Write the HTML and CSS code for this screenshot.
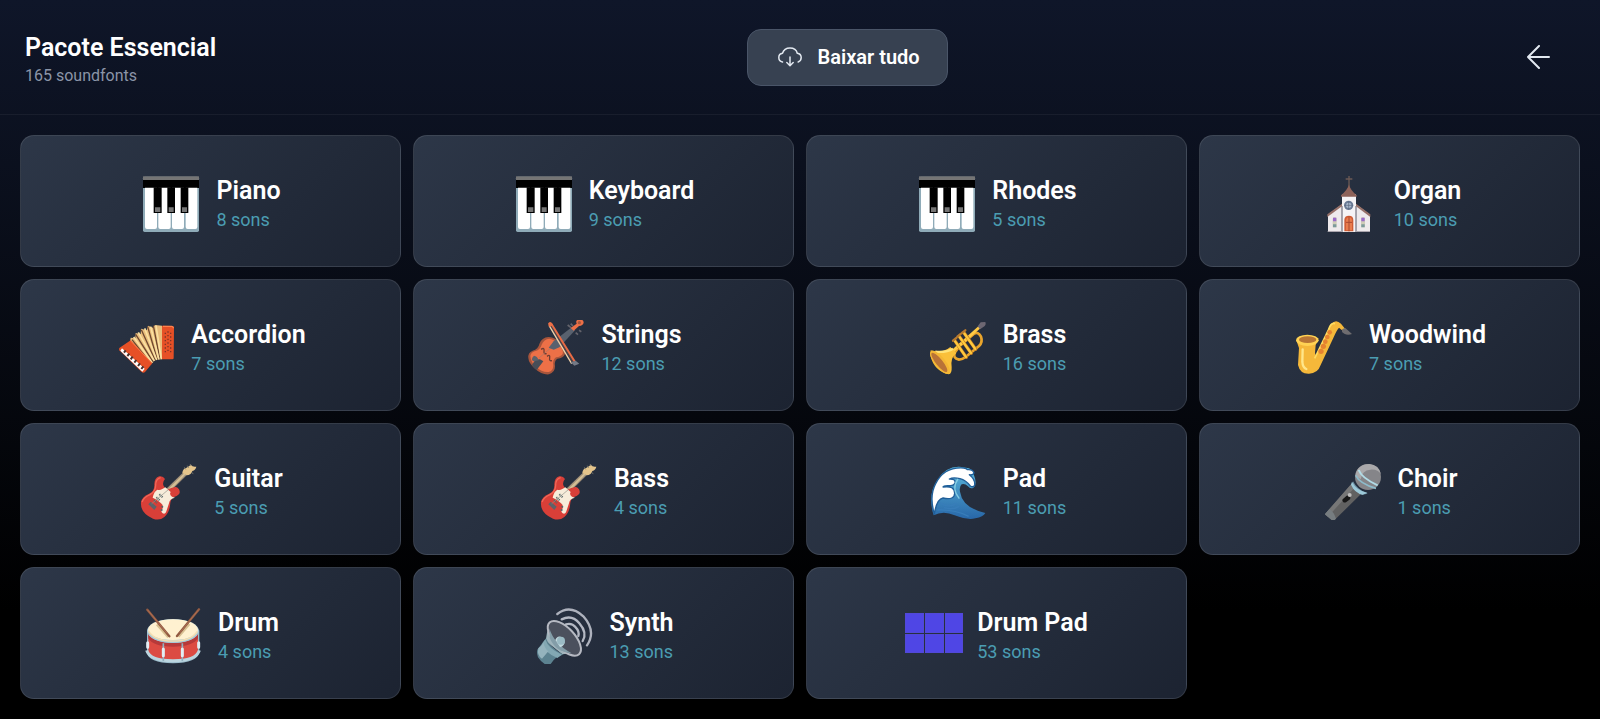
FILE: index.html
```html
<!DOCTYPE html>
<html lang="pt-BR">
<head>
	<meta charset="UTF-8">
	<meta name="viewport" content="width=device-width, initial-scale=1.0">
	<title>Pacote Essencial</title>
	<link rel="stylesheet" href="styles.css">
</head>
<body>
	<!-- icons used by more than one card -->
	<svg class="sprite" aria-hidden="true">
		<symbol id="icon-piano" viewBox="0 0 168 168">
			<rect y="2" width="168" height="166" rx="5" fill="#8fabb8"/>
			<rect y="1" width="168" height="12" fill="#757575"/>
			<rect y="12" width="168" height="24" fill="#000"/>
			<path d="M6 35h36v118q0 6-6 6H12q-6 0-6-6zM46 35h37v118q0 6-6 6H52q-6 0-6-6zM87 35h36v118q0 6-6 6H93q-6 0-6-6zM128 35h35v118q0 6-6 6h-23q-6 0-6-6z" fill="#fff"/>
			<path d="M32 34h24v77H32zM73 34h23v77H73zM113 34h23v77h-23z" fill="#000"/>
			<path d="M36 94h16v14H36zM77 94h15v14H77zM117 94h15v14h-15z" fill="#757575"/>
		</symbol>
		<symbol id="icon-guitar" viewBox="66 69 168 168">
			<path d="M139 146L193 94l10 9-55 54z" fill="#a3927a"/>
			<path d="M144 148L196 96l4 4-51 53z" fill="#d3bf95"/>
			<path d="M190 96Q191 82 203 80L216 71q4 8 16 6-2 10-12 13-3 12-17 13z" fill="#e5c58c"/>
			<path d="M196 79l4 6M205 74l4 6M213 69l4 6M218 95l5 3" stroke="#77776f" stroke-width="3"/>
			<path d="M66 184q3-17 23-25 18-8 17-27-1-21 15-26 11-2 17 8-9 10-4 21 5 11 17 8 14-5 18-5 5-1 11 7 7 14-7 20-17 5-19 20-2 30-18 43-14 12-34 5-39-17-36-49z" fill="#d93f38"/>
			<path d="M69 183q6-15 24-22 17-9 17-28 0-20 15-23" fill="none" stroke="#f16859" stroke-width="4"/>
			<path d="M101 170q4-19 14-24 8 2 15-2l9-5 16 14q-5 8 4 14l9 3q-17 4-18 17l-9 27q-4 7-10 3-7-5-1-13 5-10-4-17-5-7-25-17z" fill="#f7edda"/>
			<path d="M88 190l7-8 18 15-7 10z" fill="#5d6269"/>
			<path d="M105 178l9 8M112 169l11 10M121 160l11 10" stroke="#526669" stroke-width="6" stroke-dasharray="3 2"/>
			<path d="M98 188l50-42" stroke="#8f9188" stroke-width="2"/>
			<circle cx="130" cy="197" r="3" fill="#54666b"/><circle cx="128" cy="207" r="3" fill="#54666b"/>
		</symbol>
	</svg>

	<header class="header">
		<div class="pack">
			<h1>Pacote Essencial</h1>
			<p>165 soundfonts</p>
		</div>
		<button type="button" class="download">
			<svg width="24" height="24" viewBox="0 0 24 24" fill="none" stroke="currentColor" stroke-width="1.5" stroke-linecap="round" stroke-linejoin="round" aria-hidden="true">
				<path d="M4.5 17C2 16.5.8 14.500.8 12.500c0-2.500 1.600-4 3.700-4.300C5.500 5 8.300 3 12 3s6.500 2 7.300 5.200c2.200.3 3.900 2 3.900 4.400 0 2-1.200 3.800-3 4.400"/>
				<path d="M12 12v8.500M8.800 17.500l3.200 3.200 3.200-3.200"/>
			</svg>
			Baixar tudo
		</button>
		<button type="button" class="back" aria-label="Voltar">
			<svg width="24" height="24" viewBox="0 0 24 24" fill="none" stroke="currentColor" stroke-width="2" stroke-linecap="round" stroke-linejoin="round" aria-hidden="true">
				<path d="M12 1L1 12l11 11M1 12h21"/>
			</svg>
		</button>
	</header>

	<main class="grid">
		<button type="button" class="card">
			<svg class="icon" aria-hidden="true"><use href="#icon-piano"/></svg>
			<span class="info"><span class="name">Piano</span><span class="count">8 sons</span></span>
		</button>
		<button type="button" class="card">
			<svg class="icon" aria-hidden="true"><use href="#icon-piano"/></svg>
			<span class="info"><span class="name">Keyboard</span><span class="count">9 sons</span></span>
		</button>
		<button type="button" class="card">
			<svg class="icon" aria-hidden="true"><use href="#icon-piano"/></svg>
			<span class="info"><span class="name">Rhodes</span><span class="count">5 sons</span></span>
		</button>
		<button type="button" class="card">
			<svg class="icon" viewBox="63 495 168 168" aria-hidden="true">
				<path d="M147 492v36M137 504h20" stroke="#6c5a55" stroke-width="4"/>
				<path d="M84 611l40-30h46l40 30v52H84z" fill="#eeeaec"/>
				<path d="M126 663V550h42v113z" fill="#f5f3f5"/>
				<path d="M126 585v78M168 585v78" stroke="#5b5966" stroke-width="3"/>
				<path d="M147 521q3 14 23 32v4h-47v-4q20-18 24-32z" fill="#8d6259"/>
				<path d="M126 578l-44 32v8l44-32zM168 578l43 32v8l-43-32z" fill="#967068"/>
				<circle cx="146" cy="583" r="14" fill="#6c7c96"/>
				<circle cx="146" cy="583" r="8" fill="#aab9cd"/>
				<path d="M146 570v26M133 583h26" stroke="#59677f" stroke-width="2"/>
				<path d="M133 661v-34q0-13 14-13 13 0 13 13v34z" fill="#cf5c35"/>
				<path d="M138 658v-29q0-9 9-10 9 1 9 10v29z" fill="#e87c4e"/>
				<path d="M147 616v45M138 634h18" stroke="#a9482f" stroke-width="3"/>
				<path d="M98 649v-24q0-7 6-7t6 7v24zM183 649v-24q0-7 6-7t6 7v24z" fill="#cfcdb9"/>
				<path d="M99 620h10v11H99zM184 620h10v11h-10z" fill="#9a69c9"/>
				<path d="M99 640h10v9H99zM184 640h10v9h-10z" fill="#7c9a9b"/>
				<path d="M83 662h43M168 662h42" stroke="#aaa5ad" stroke-width="4"/>
			</svg>
			<span class="info"><span class="name">Organ</span><span class="count">10 sons</span></span>
		</button>

		<button type="button" class="card">
			<svg class="icon" viewBox="54 60 168 168" aria-hidden="true">
				<path d="M90 125l2-12 14 2 1-16 15 3 1-16 17 5 4-14 14 6 7-8 21 2v98l-22 1-9 4-14 18z" fill="#e9bd7c"/>
				<path d="M96 119l58 74M107 103l53 84M124 89l42 93M143 80l29 100M160 77l20 102" stroke="#6e4830" stroke-width="4"/>
				<path d="M101 111l56 78M115 97l48 86M134 85l36 95M152 80l25 99M168 77l16 101" stroke="#fbe1a2" stroke-width="5"/>
				<path d="M186 77l31 1q5 1 5 6l-1 90q0 4-4 4h-31z" fill="#e65026"/>
				<path d="M189 79h26q5 0 5 6" fill="none" stroke="#ff804b" stroke-width="4"/>
				<path d="M196 98v66M204 94v66M212 98v66" stroke="#7d3328" stroke-width="4" stroke-dasharray="4 7"/>
				<path d="M92 121l65 69-22 26q-5 4-10 0l-67-65q-3-4 1-8z" fill="#e65026"/>
				<path d="M93 124l61 64" stroke="#fa7846" stroke-width="3"/>
				<path d="M66 145l68 61-7 9-66-63z" fill="#fff"/>
				<path d="M77 151l-5 7M88 161l-6 7M98 170l-6 8M109 180l-6 8M120 190l-6 8M130 199l-6 8" stroke="#4b312c" stroke-width="6"/>
			</svg>
			<span class="info"><span class="name">Accordion</span><span class="count">7 sons</span></span>
		</button>
		<button type="button" class="card">
			<svg class="icon" viewBox="56 60 168 168" aria-hidden="true">
				<path d="M57 174q-2-16 13-22 17-4 20-20 7-20 28-21 21 1 34 20 18 18 15 31-5 13-23 14-10 7-7 23 0 19-18 24-22 2-41-16-20-17-21-33z" fill="#a7553c"/>
				<path d="M63 168q2-11 13-14 17-5 21-20 7-17 23-18 17 2 29 19 15 16 11 27-6 9-20 10-11 8-8 24 0 17-14 20-20 2-37-14-17-16-18-34z" fill="#ed7047"/>
				<path d="M95 148q11-7 9 6-1 9 8 7M113 169q10-7 8 5-2 10 7 8" fill="none" stroke="#713e33" stroke-width="4"/>
				<path d="M78 179l14-1 10 6-20 26q-9-5-14-15z" fill="#474e58"/>
				<path d="M74 167q10 1 14 14l-15 3q-11-5 1-17z" fill="#5e626a"/>
				<path d="M89 174l99-85" stroke="#a5796b" stroke-width="2"/>
				<path d="M118 143l15-19 54-42 11 8-48 52-17 7z" fill="#59616e"/>
				<path d="M175 75l10 8M199 98l7 6M209 91l7 4M184 71l7 7" stroke="#65646c" stroke-width="5"/>
				<path d="M184 84l18-13q-5-11 8-13 13 0 13 10-2 9-14 10l-16 14z" fill="#ed7047"/>
				<circle cx="210" cy="68" r="5" fill="#a9583e"/>
				<path d="M122 73l70 112" stroke="#4b4248" stroke-width="8"/>
				<path d="M119 76l68 115" stroke="#f1d1a9" stroke-width="4"/>
				<path d="M126 71l71 115" stroke="#e96b44" stroke-width="6"/>
				<path d="M116 71q4-8 11-3l4 8-11 5z" fill="#ed7047"/>
				<path d="M184 187l15-5 11 9-15 6z" fill="#737985"/>
			</svg>
			<span class="info"><span class="name">Strings</span><span class="count">12 sons</span></span>
		</button>
		<button type="button" class="card">
			<svg class="icon" viewBox="60 60 168 168" aria-hidden="true">
				<path d="M135 157q-8 18 12 22 9 0 20-8l40-33q12-12 6-28-8-17-22-8l-42 36z" fill="none" stroke="#eaa52c" stroke-width="8"/>
				<path d="M124 157l85-76" stroke="#ffca45" stroke-width="9"/>
				<path d="M135 123l34 49M149 111l35 49M163 100l34 48" stroke="#b77320" stroke-width="10" stroke-linecap="round"/>
				<path d="M134 122l34 49M148 110l35 49M162 99l34 48" stroke="#ffc93d" stroke-width="7" stroke-linecap="round"/>
				<path d="M129 122l10-8M142 110l10-8M156 99l10-8" stroke="#b97a2e" stroke-width="7" stroke-linecap="round"/>
				<path d="M203 79l9-12 14-1q4 9-6 15l-10 7z" fill="#6d6772"/>
				<path d="M62 151q35 10 59-10l18 18q-18 14-14 42 1 21-9 22-43-10-55-56z" fill="#fac03a"/>
				<path d="M76 155q34 3 53-9" fill="none" stroke="#ffe379" stroke-width="7"/>
				<ellipse cx="90" cy="187" rx="43" ry="16" transform="rotate(51 90 187)" fill="#f4b735"/>
				<ellipse cx="88" cy="187" rx="36" ry="10" transform="rotate(51 88 187)" fill="#b97337"/>
			</svg>
			<span class="info"><span class="name">Brass</span><span class="count">16 sons</span></span>
		</button>
		<button type="button" class="card">
			<svg class="icon" viewBox="46 60 168 168" aria-hidden="true">
				<path d="M48 124l7 20-3 51q6 27 33 26 26 0 35-26l39-83q9-22 16-29l11 9q6 1 7-6l-12-15q-15-15-29 0-10 16-16 37l-30 60-3-9 2-24 9-20z" fill="#f5b83a"/>
				<path d="M102 175l42-87q7-21 19-17" fill="none" stroke="#ffdc61" stroke-width="5"/>
				<path d="M66 148l-1 37q1 18 12 22" fill="none" stroke="#ffe68a" stroke-width="7" stroke-linecap="round"/>
				<ellipse cx="80" cy="121" rx="34" ry="17" fill="#ffd253"/>
				<ellipse cx="81" cy="119" rx="26" ry="10" fill="#b87535"/>
				<g fill="#e68230"><circle cx="147" cy="97" r="7"/><circle cx="140" cy="111" r="7"/><circle cx="134" cy="125" r="7"/><circle cx="128" cy="139" r="8"/><circle cx="121" cy="154" r="8"/></g>
				<path d="M185 87l9-3 20 18q-13 5-23-1l-7-5z" fill="#6f6d70"/>
			</svg>
			<span class="info"><span class="name">Woodwind</span><span class="count">7 sons</span></span>
		</button>

		<button type="button" class="card">
			<svg class="icon" aria-hidden="true"><use href="#icon-guitar"/></svg>
			<span class="info"><span class="name">Guitar</span><span class="count">5 sons</span></span>
		</button>
		<button type="button" class="card">
			<svg class="icon" aria-hidden="true"><use href="#icon-guitar"/></svg>
			<span class="info"><span class="name">Bass</span><span class="count">4 sons</span></span>
		</button>
		<button type="button" class="card">
			<svg class="icon" viewBox="62 39 168 168" aria-hidden="true">
				<defs>
					<linearGradient id="sea" x2="0" y2="1">
						<stop offset="0" stop-color="#5bb8dc"/>
						<stop offset="1" stop-color="#2867a8"/>
					</linearGradient>
				</defs>
				<path d="M73 193q-20-63 12-107 30-48 83-36 21-1 25 20 12 31-1 40-8 6-17-5-8-8-18-5-8 7-5 22 7 48 76 64-6 12-30 16-24 6-62-9-34-16-63 0z" fill="url(#sea)"/>
				<path d="M92 155q24 18 51 2M104 170q27 8 45-4M84 177q50-3 94 19" fill="none" stroke="#387db9" stroke-width="4"/>
				<path d="M75 189Q59 135 79 98q25-51 84-47 9 1 11 5 17-2 20 10-2 7-14 5 18 13 16 32-5 7-13 2-13-17-31-22-21-5-32 1 19-1 17 11-2 10-17 9-17-1-19 4 35-5 35 19 0 21-35 14-19 3-26 48z" fill="#fff" stroke="#205f99" stroke-width="4" stroke-linejoin="round"/>
				<path d="M146 84q-21 28 4 59" fill="none" stroke="#83cbe3" stroke-width="4"/>
			</svg>
			<span class="info"><span class="name">Pad</span><span class="count">11 sons</span></span>
		</button>
		<button type="button" class="card">
			<svg class="icon" viewBox="73 39 168 168" aria-hidden="true">
				<path d="M74 188l80-91 30 29-80 79q-6 6-12 1l-17-14q-3-2-1-4z" fill="#616161"/>
				<path d="M74 188l80-91 10 10-82 90z" fill="#777"/>
				<path d="M74 188l12-13q14 8 20 28l-4 4q-4 2-10-1l-17-14q-3-2-1-4z" fill="#777d80"/>
				<path d="M126 145l12-11q5-2 9 2t1 9l-12 9q-6 2-9-2-4-4-1-7z" fill="#171717"/>
				<circle cx="147" cy="132" r="6" fill="#bdbdbd"/>
				<circle cx="202" cy="78" r="39" fill="#858589"/>
				<path d="M164 75q5-35 42-36 29 2 35 31-9-16-32-14-25 2-29 29z" fill="#aaa9ab"/>
				<path d="M157 91q12 25 44 37l-17 3q-21-9-31-29z" fill="#7094a7"/>
				<path d="M165 73q12 25 61 39" fill="none" stroke="#8dbbcb" stroke-width="5"/>
				<path d="M174 57q9 24 57 46" fill="none" stroke="#b1dce7" stroke-width="6"/>
				<path d="M154 92q12 26 46 33l-14 6q-24-5-35-30z" fill="#9cc8d8"/>
			</svg>
			<span class="info"><span class="name">Choir</span><span class="count">1 sons</span></span>
		</button>

		<button type="button" class="card">
			<svg class="icon" viewBox="76 51 168 168" aria-hidden="true">
				<path d="M82 118v66q3 32 78 33 73-1 79-33v-66z" fill="#9bbccb"/>
				<path d="M86 128q15 28 74 29 58-1 75-29v54q-13 27-75 27-60 0-74-27z" fill="#dc4b43"/>
				<path d="M86 142q14 25 74 25 59 0 75-25v-14q-15 27-75 28-60-1-74-28z" fill="#b6393a"/>
				<path d="M81 178q9 31 79 31t79-31" fill="none" stroke="#bbd5df" stroke-width="9"/>
				<ellipse cx="160" cy="120" rx="78" ry="36" fill="#a9c9d8"/>
				<ellipse cx="160" cy="116" rx="75" ry="31" fill="#fff1d0"/>
				<path d="M87 121q18 29 73 29t73-29" fill="none" stroke="#f4deb1" stroke-width="5"/>
				<path d="M112 100l34 38M209 99l-33 38" stroke="#d8c092" stroke-width="8"/>
				<path d="M131 157v53M188 157v53" stroke="#92b0bf" stroke-width="5"/>
				<path d="M131 174v20M188 174v20M84 155v14M237 155v14" stroke="#e2edf3" stroke-width="9" stroke-linecap="round"/>
				<path d="M83 56l66 80M238 55l-66 80" stroke="#925a42" stroke-width="7" stroke-linecap="round"/>
				<path d="M84 57l58 70M237 56l-57 70" stroke="#b9785a" stroke-width="2"/>
			</svg>
			<span class="info"><span class="name">Drum</span><span class="count">4 sons</span></span>
		</button>
		<button type="button" class="card">
			<svg class="icon" viewBox="0 0 168 168" aria-hidden="true">
				<path d="M61 18q38-30 78 7 40 45 11 87" fill="none" stroke="#aeb2bd" stroke-width="7" stroke-linecap="round"/>
				<path d="M74 34q31-15 53 12 25 29 10 53" fill="none" stroke="#b4b8c3" stroke-width="7" stroke-linecap="round"/>
				<path d="M87 49q18-5 29 9 12 12 8 26" fill="none" stroke="#b4b8c3" stroke-width="7" stroke-linecap="round"/>
				<path d="M36 49q-7 26-10 50l50 40q24-5 49-1z" fill="#9eb4bc"/>
				<path d="M27 91q8 25 52 49-22 2-38 28-19 9-38-20-7-20 1-27z" fill="#5c8290"/>
				<path d="M25 94q8 28 50 46l-14 10q-36-13-45-44z" fill="#83a8b3"/>
				<path d="M4 121q10-9 15-17 5 18 15 26l-19 22q-16-9-11-31z" fill="#94b3bd"/>
				<ellipse cx="82" cy="91" rx="65" ry="31" transform="rotate(47 82 91)" fill="#4b505d" stroke="#b6b9c2" stroke-width="6"/>
				<path d="M37 61q14 47 67 75-48-3-66-46z" fill="#839da8"/>
				<path d="M55 96q5-13 16-10 12 5 12 19-5 12-14 12z" fill="#c1d9df"/>
				<circle cx="72" cy="98" r="12" fill="#9abac4"/>
			</svg>
			<span class="info"><span class="name">Synth</span><span class="count">13 sons</span></span>
		</button>
		<button type="button" class="card">
			<span class="pads" aria-hidden="true"><i></i><i></i><i></i><i></i><i></i><i></i></span>
			<span class="info"><span class="name">Drum Pad</span><span class="count">53 sons</span></span>
		</button>
	</main>
</body>
</html>
```
FILE: styles.css
```css
*, *:before, *:after {
	box-sizing: border-box;
}
html {
	min-height: 100%;
	background: linear-gradient(180deg, #0f1629 0%, #000 85%);
}
body {
	margin: 0;
	font-family: Roboto, sans-serif;
	color: #fff;
}
h1, p {
	margin: 0;
}
button {
	font-family: inherit;
	color: inherit;
	cursor: pointer;
}
.sprite {
	position: absolute;
	width: 0;
	height: 0;
}

.header {
	display: flex;
	align-items: center;
	justify-content: space-between;
	min-height: 115px;
	padding: 0 25px;
	border-bottom: 1px solid rgba(255, 255, 255, 0.05);
}
.pack {
	padding-top: 5px;
}
.pack h1 {
	font-size: 25px;
	line-height: 32px;
	font-weight: 600;
}
.pack p {
	font-size: 16px;
	line-height: 24px;
	color: #8b95a8;
}
.download {
	display: flex;
	align-items: center;
	gap: 16px;
	height: 57px;
	padding: 0 27px 0 30px;
	border: 1px solid #4a5568;
	border-radius: 14px;
	background: #374151;
	font-size: 20px;
	font-weight: 600;
}
.download svg {
	color: #e2e8f0;
}
.back {
	display: flex;
	align-items: center;
	justify-content: center;
	width: 72px;
	height: 56px;
	margin-left: 25px;
	padding: 0;
	border: 0;
	background: none;
	color: #e2e8f0;
}

.grid {
	display: grid;
	grid-template-columns: repeat(4, 1fr);
	gap: 12px;
	padding: 20px;
}
.card {
	display: flex;
	align-items: center;
	justify-content: center;
	gap: 14px;
	min-height: 132px;
	padding: 18px 12px 12px;
	border: 1px solid rgba(255, 255, 255, 0.1);
	border-radius: 14px;
	background: linear-gradient(135deg, #2d3748, #1c2331);
	text-align: left;
}
.icon {
	flex: none;
	width: 62px;
	height: 56px;
}
.info {
	display: flex;
	flex-direction: column;
}
.name {
	font-size: 25px;
	line-height: 32px;
	font-weight: 600;
}
.count {
	font-size: 18px;
	line-height: 26px;
	color: #4b9db2;
}

.pads {
	display: grid;
	grid-template-columns: repeat(3, 1fr);
	gap: 1px;
	width: 58px;
	height: 40px;
	margin-bottom: 6px;
}
.pads i {
	background: #4f46e5;
	border: 1px solid #5249d8;
}
```
